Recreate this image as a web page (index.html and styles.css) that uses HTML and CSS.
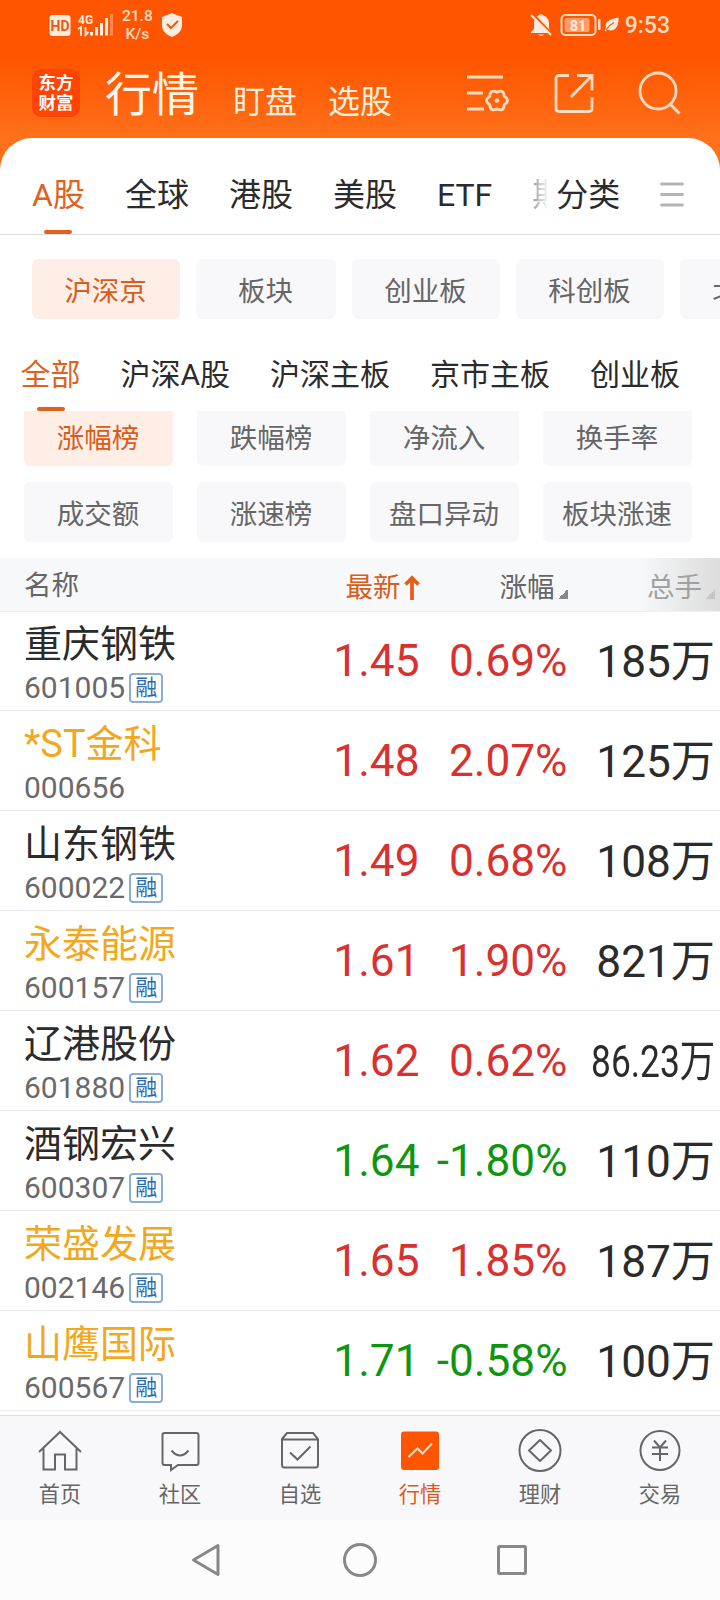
FILE: index.html
```
<!DOCTYPE html>
<html lang="zh-CN">
<head>
    <meta charset="UTF-8">
    <meta name="viewport" content="width=device-width, initial-scale=1.0">
    <title>行情</title>
    <link rel="stylesheet" href="styles.css">
</head>
<body>
    <div class="app">
        <header class="top">
            <div class="status-bar">
                <svg class="status-left" width="66" height="28" viewBox="0 0 66 28">
                    <rect x="1.500" y="3" width="21" height="21" rx="3" fill="#ffece0"/>
                    <text x="12" y="18.500" class="hd-text">HD</text>
                    <text x="30" y="11.500" class="net-text">4G</text>
                    <path d="M30 17l3-2v9M37.500 15v8l3-3" stroke="#ffece0" stroke-width="1.800" fill="none"/>
                    <g fill="#ffece0">
                        <rect x="42" y="20" width="3" height="3.500"/>
                        <rect x="47" y="15" width="3" height="8.500"/>
                        <rect x="52" y="11" width="3" height="12.500"/>
                        <rect x="57" y="6" width="3" height="17.500"/>
                        <rect x="62" y="2" width="3" height="21.500" opacity="0.35"/>
                    </g>
                </svg>
                <div class="net-speed"><span>21.8</span><span>K/s</span></div>
                <svg class="shield" width="22" height="26" viewBox="0 0 22 26">
                    <path d="M11 1l10 4v8c0 6-4 9.500-10 12C5 22.500 1 19 1 13V5z" fill="#ffece0"/>
                    <path d="M6 12l4 4 7-7" fill="none" stroke="#e85a14" stroke-width="2"/>
                </svg>
                <svg class="bell" width="22" height="24" viewBox="0 0 22 24">
                    <path d="M8.500 2.500Q11 0 13.500 2.500Q19 4.500 19 10v6l2 3v1H1v-1l3-3v-6Q4 4.500 8.500 2.500z" fill="#ffece0"/>
                    <path d="M8 21.500h6q-3 2.500-6 0z" fill="#ffece0"/>
                    <path d="M2.500 0.500L22 21" stroke="#ff5500" stroke-width="2"/>
                    <path d="M1 2L21 22" stroke="#ffece0" stroke-width="2"/>
                </svg>
                <svg class="battery" width="42" height="24" viewBox="0 0 42 24">
                    <rect x="1.500" y="2" width="34" height="20" rx="4" fill="none" stroke="#ffdcc4" stroke-width="2"/>
                    <rect x="4.500" y="5" width="25" height="14" rx="2" fill="#ff9c66"/>
                    <rect x="38" y="6" width="2.500" height="11" rx="1" fill="#ffdcc4"/>
                    <text x="18" y="17.500" class="battery-text">81</text>
                </svg>
                <svg class="leaf" width="15" height="15" viewBox="0 0 15 15">
                    <path d="M14.500 0.500C15 8 12 14 6 13.500L3.500 12.500 1.500 14.500 0.500 13.500 2 11C0 4 7 2 14.500 0.500z" fill="#ffece0"/>
                    <path d="M2 13Q5 8 10 5.500" stroke="#ff5500" stroke-width="1.200" fill="none"/>
                </svg>
                <span class="clock">9:53</span>
            </div>
            <div class="title-bar">
                <div class="logo"><span>东方</span><span>财富</span></div>
                <h1 class="title">行情</h1>
                <span class="title-link">盯盘</span>
                <span class="title-link">选股</span>
                <div class="title-icons">
                    <svg width="42" height="38" viewBox="0 0 42 38" fill="none" stroke="#ffdcc0" stroke-width="2.800">
                        <path d="M0 3h36M0 19h16M0 35h17"/>
                        <path d="M37.200 22.350Q43.800 26.500 37.200 30.650Q36.900 38.450 30 34.800Q23.100 38.450 22.800 30.650Q16.200 26.500 22.800 22.350Q23.100 14.550 30 18.200Q36.900 14.550 37.200 22.350z" stroke-linejoin="round"/>
                        <circle cx="30" cy="26.500" r="2.300" fill="#ffdcc0" stroke="none"/>
                    </svg>
                    <svg width="40" height="40" viewBox="0 0 40 40" fill="none" stroke="#ffdcc0" stroke-width="2.800">
                        <path d="M15 2.500H5Q2 2.500 2 5.500v30q0 3 3 3H35q3 0 3-3V24.500M23 2.500h15v15M37.500 3L17 24"/>
                    </svg>
                    <svg width="44" height="44" viewBox="0 0 44 44" fill="none" stroke="#ffdcc0" stroke-width="2.800">
                        <circle cx="20" cy="20" r="18"/>
                        <path d="M32 33l9.500 9.500" stroke-width="3"/>
                    </svg>
                </div>
            </div>
        </header>

        <main class="panel">
            <nav class="market-tabs">
                <span class="market-tab active">A股</span>
                <span class="market-tab">全球</span>
                <span class="market-tab">港股</span>
                <span class="market-tab">美股</span>
                <span class="market-tab">ETF</span>
                <span class="market-tab cut">期</span>
                <span class="category">分类</span>
                <svg class="menu-icon" width="24" height="26" viewBox="0 0 24 26" stroke="#b4b4b4" stroke-width="2.800" stroke-linecap="round">
                    <path d="M1.500 2h21M1.500 12.500h21M1.500 23h21"/>
                </svg>
            </nav>

            <div class="board-chips">
                <span class="chip active">沪深京</span>
                <span class="chip short">板块</span>
                <span class="chip">创业板</span>
                <span class="chip">科创板</span>
                <span class="chip">北交所</span>
            </div>

            <nav class="sub-tabs">
                <span class="sub-tab active">全部</span>
                <span class="sub-tab">沪深A股</span>
                <span class="sub-tab">沪深主板</span>
                <span class="sub-tab">京市主板</span>
                <span class="sub-tab">创业板</span>
            </nav>

            <div class="rank-scroll">
                <div class="rank-chips">
                    <span class="chip active">涨幅榜</span>
                    <span class="chip">跌幅榜</span>
                    <span class="chip">净流入</span>
                    <span class="chip">换手率</span>
                    <span class="chip">成交额</span>
                    <span class="chip">涨速榜</span>
                    <span class="chip">盘口异动</span>
                    <span class="chip">板块涨速</span>
                </div>
            </div>

            <div class="stock-head">
                <span class="head-name">名称</span>
                <span class="head-price">最新<svg width="16" height="26" viewBox="0 0 16 26" fill="none" stroke="#e2601c" stroke-width="3.800"><path d="M8 25V3M1.500 9.500L8 3l6.500 6.500"/></svg></span>
                <span class="head-change">涨幅<i class="corner"></i></span>
                <span class="head-volume">总手<i class="corner"></i></span>
            </div>

            <div class="stock-list">
                <div class="stock">
                    <div class="stock-name"><b>重庆钢铁</b><span class="code">601005<em>融</em></span></div>
                    <span class="price up">1.45</span><span class="change up">0.69%</span><span class="volume">185万</span>
                </div>
                <div class="stock">
                    <div class="stock-name held"><b>*ST金科</b><span class="code">000656</span></div>
                    <span class="price up">1.48</span><span class="change up">2.07%</span><span class="volume">125万</span>
                </div>
                <div class="stock">
                    <div class="stock-name"><b>山东钢铁</b><span class="code">600022<em>融</em></span></div>
                    <span class="price up">1.49</span><span class="change up">0.68%</span><span class="volume">108万</span>
                </div>
                <div class="stock">
                    <div class="stock-name held"><b>永泰能源</b><span class="code">600157<em>融</em></span></div>
                    <span class="price up">1.61</span><span class="change up">1.90%</span><span class="volume">821万</span>
                </div>
                <div class="stock">
                    <div class="stock-name"><b>辽港股份</b><span class="code">601880<em>融</em></span></div>
                    <span class="price up">1.62</span><span class="change up">0.62%</span><span class="volume narrow">86.23万</span>
                </div>
                <div class="stock">
                    <div class="stock-name"><b>酒钢宏兴</b><span class="code">600307<em>融</em></span></div>
                    <span class="price down">1.64</span><span class="change down">-1.80%</span><span class="volume">110万</span>
                </div>
                <div class="stock">
                    <div class="stock-name held"><b>荣盛发展</b><span class="code">002146<em>融</em></span></div>
                    <span class="price up">1.65</span><span class="change up">1.85%</span><span class="volume">187万</span>
                </div>
                <div class="stock">
                    <div class="stock-name held"><b>山鹰国际</b><span class="code">600567<em>融</em></span></div>
                    <span class="price down">1.71</span><span class="change down">-0.58%</span><span class="volume">100万</span>
                </div>
            </div>
        </main>

        <footer class="tab-bar">
            <div class="tab-item">
                <svg width="44" height="44" viewBox="0 0 44 44">
                    <path d="M1 23L22 3l21 20M5.500 19.500V40.500H17V25.500H27V40.500H38.500V19.500"/>
                </svg>
                <span>首页</span>
            </div>
            <div class="tab-item">
                <svg width="44" height="44" viewBox="0 0 44 44">
                    <path d="M5.500 4h33q2 0 2 2v28q0 2-2 2H20l-7 5v-5H6.500q-2 0-2-2V6q0-2 2-2zM13.500 21.500q8.500 10 17 0"/>
                </svg>
                <span>社区</span>
            </div>
            <div class="tab-item">
                <svg width="44" height="44" viewBox="0 0 44 44">
                    <path d="M4 10l5-6h26l5 6v26q0 2.500-2.500 2.500h-31Q4 38.500 4 36zM4 10.500h36M12 23.500l7.500 7 13-13"/>
                </svg>
                <span>自选</span>
            </div>
            <div class="tab-item active">
                <svg width="44" height="44" viewBox="0 0 44 44">
                    <rect class="tile" x="3" y="2.500" width="38" height="38.500" rx="3"/>
                    <path class="trend" d="M10.500 28l9-8.500 5 5L34 14.500"/>
                </svg>
                <span>行情</span>
            </div>
            <div class="tab-item">
                <svg width="44" height="44" viewBox="0 0 44 44">
                    <circle cx="22" cy="21.500" r="20.500"/>
                    <path d="M22 11l11 10.500-11 10.500-11-10.500z" stroke-linejoin="round"/>
                </svg>
                <span>理财</span>
            </div>
            <div class="tab-item">
                <svg width="44" height="44" viewBox="0 0 44 44">
                    <circle cx="22" cy="21.500" r="19.500"/>
                    <path d="M16 11.500l6 7 6-7M14 18.500h16M14 25h16M22 18.500v13.500"/>
                </svg>
                <span>交易</span>
            </div>
        </footer>

        <div class="system-nav">
            <svg width="34" height="34" viewBox="0 0 34 34"><path d="M27 2.500L2.500 17 27 31.500z"/></svg>
            <svg width="34" height="34" viewBox="0 0 34 34"><circle cx="17" cy="17" r="15.500"/></svg>
            <svg width="34" height="34" viewBox="0 0 34 34"><rect x="3.500" y="3.500" width="27" height="27" rx="1"/></svg>
        </div>
    </div>
</body>
</html>
```
FILE: styles.css
```
* {
    margin: 0;
    padding: 0;
    box-sizing: border-box;
}

body {
    width: 720px;
    height: 1600px;
    overflow: hidden;
    font-family: Roboto, "Noto Sans CJK SC", sans-serif;
    background: #fff;
    color: #2b2b2b;
}

svg {
    display: block;
    flex-shrink: 0;
}

.app {
    display: flex;
    flex-direction: column;
    height: 1600px;
    background: linear-gradient(#ff5500 0, #ff5500 58px, #ff701a 138px, #ff701a 180px, #fff 180px);
}

/* status bar */
.top {
    height: 138px;
}

.status-bar {
    display: flex;
    align-items: center;
    height: 49px;
    padding: 0 50px 0 48px;
    color: #ffdcc4;
}

.status-left {
    margin-top: 2px;
}

.hd-text {
    font-size: 14px;
    font-weight: bold;
    text-anchor: middle;
    fill: #e85a14;
}

.net-text {
    font-size: 12px;
    font-weight: bold;
    fill: #ffece0;
}

.net-speed {
    display: flex;
    flex-direction: column;
    align-items: center;
    margin-left: 8px;
    font-size: 15.5px;
    font-weight: 500;
    line-height: 18px;
}

.shield {
    margin-left: 8px;
}

.bell {
    margin-left: auto;
}

.battery {
    margin-left: 8px;
}

.battery-text {
    font-size: 14.5px;
    font-weight: bold;
    text-anchor: middle;
    fill: #ffece0;
}

.leaf {
    margin-left: 2px;
}

.clock {
    margin-left: 6px;
    padding-top: 2px;
    font-size: 23px;
    font-weight: 500;
}

/* title bar */
.title-bar {
    display: flex;
    height: 89px;
    padding: 0 38px 0 32px;
}

.logo {
    display: flex;
    flex-direction: column;
    justify-content: center;
    align-items: center;
    width: 48px;
    height: 48px;
    margin-top: 20px;
    border-radius: 9px;
    background: #ff4404;
    color: #fff;
    font-size: 17.5px;
    font-weight: 700;
    line-height: 20px;
}

.title {
    margin-left: 25px;
    font-size: 47px;
    font-weight: 400;
    line-height: 92px;
    color: #fff5e8;
}

.title-link {
    margin-left: 34px;
    font-size: 32px;
    line-height: 106px;
    color: #fff0dc;
}

.title-link + .title-link {
    margin-left: 31px;
}

.title-icons {
    display: flex;
    align-items: center;
    gap: 44.500px;
    height: 87px;
    margin-left: auto;
}

/* white panel */
.panel {
    flex: 1;
    min-height: 0;
    border-radius: 32px 32px 0 0;
    background: #fff;
}

.market-tabs {
    display: flex;
    align-items: center;
    height: 97px;
    padding: 17px 36px 0 32px;
    border-bottom: 1px solid #dedede;
    font-size: 32px;
    line-height: 60px;
}

.market-tab {
    margin-right: 40px;
    white-space: nowrap;
}

.market-tab.active,
.sub-tab.active {
    position: relative;
    color: #e2601c;
}

.market-tab.active::after,
.sub-tab.active::after {
    content: '';
    position: absolute;
    left: 50%;
    bottom: -9px;
    width: 28px;
    height: 4px;
    margin-left: -14px;
    border-radius: 2px;
    background: #e2601c;
}

.market-tab.cut {
    width: 15px;
    margin-right: 9px;
    overflow: hidden;
    background: linear-gradient(90deg, #999, #f4f4f4);
    background-clip: text;
    color: transparent;
}

.menu-icon {
    margin-left: auto;
}

.chip {
    display: flex;
    align-items: center;
    justify-content: center;
    height: 60px;
    padding-right: 1px;
    border-radius: 6px;
    background: #f8f8fa;
    color: #666;
    font-size: 27.5px;
    white-space: nowrap;
}

.chip.active {
    background: #ffeee6;
    color: #d85c20;
}

.board-chips {
    display: flex;
    gap: 16px;
    padding: 24px 0 0 32px;
    overflow: hidden;
}

.board-chips .chip {
    flex: 0 0 148px;
}

.board-chips .chip.short {
    flex-basis: 140px;
}

.sub-tabs {
    display: flex;
    gap: 40px;
    height: 92px;
    padding: 26px 0 0 20.500px;
    font-size: 30px;
    line-height: 60px;
}

.sub-tab.active {
    height: 60px;
}

.sub-tab.active::after {
    bottom: -6px;
}

/* first row is scrolled slightly under the tabs */
.rank-scroll {
    display: flex;
    flex-direction: column;
    justify-content: flex-end;
    height: 131px;
    overflow: hidden;
}

.rank-chips {
    display: grid;
    grid-template-columns: repeat(4, 149px);
    gap: 16px 24px;
    padding-left: 24px;
}

/* stock table */
.stock-head,
.stock {
    display: grid;
    grid-template-columns: 260px 159.500px 148px 147.500px;
    align-items: center;
}

.stock-head {
    height: 54px;
    margin-top: 16px;
    border-bottom: 1px solid #f0f0f0;
    background: linear-gradient(90deg, #f7f8fa 640px, #dcdcdc 720px);
    color: #666;
    font-size: 27.5px;
}

.stock-head span {
    display: flex;
    align-items: center;
    justify-content: flex-end;
    padding-top: 5px;
    line-height: 50px;
}

.stock-head .head-name {
    justify-content: flex-start;
    padding: 1px 0 0 24px;
}

.stock-head .head-price {
    gap: 3px;
    color: #d85c20;
}

.corner {
    align-self: flex-end;
    width: 10px;
    height: 10px;
    margin: 0 0 14px 3px;
    background: linear-gradient(135deg, transparent 50%, #888 50%);
}

.head-volume {
    color: #a0a0a0;
}

.head-volume .corner {
    opacity: 0.3;
}

.stock-list {
    margin-top: -1px;
}

.stock {
    height: 100px;
    border-bottom: 1px solid #ebebeb;
    font-size: 44.2px;
    line-height: 60px;
    text-align: right;
}

.stock-name {
    display: flex;
    flex-direction: column;
    padding: 4px 0 0 24px;
    text-align: left;
}

.stock-name b {
    font-size: 38px;
    font-weight: 400;
    line-height: 50px;
}

.stock-name.held b {
    color: #f2a81d;
}

.code {
    display: flex;
    align-items: center;
    height: 38px;
    color: #6a6a6a;
    font-size: 30px;
}

.code em {
    width: 34px;
    height: 30px;
    margin: 1px 0 0 4px;
    border: 2px solid #8aaed2;
    border-radius: 4px;
    color: #2f6cae;
    font-size: 22px;
    font-style: normal;
    line-height: 26px;
    text-align: center;
}

.up {
    color: #d93030;
}

.down {
    color: #0f960f;
}

.change {
    white-space: nowrap;
}

.volume {
    justify-self: end;
    padding-top: 2px;
    white-space: nowrap;
}

.volume.narrow {
    transform: scaleX(0.8);
    transform-origin: right;
}

/* bottom tabs */
.tab-bar {
    display: flex;
    height: 105px;
    border-top: 1px solid #dedede;
    background: #f8f8fa;
}

.tab-item {
    display: flex;
    flex: 1;
    flex-direction: column;
    align-items: center;
    padding-top: 13px;
    color: #666;
    font-size: 21.200px;
    line-height: 43px;
}

.tab-item svg {
    fill: none;
    stroke: #666;
    stroke-width: 2;
}

.tab-item .tile {
    fill: #ff5500;
    stroke: none;
}

.tab-item .trend {
    stroke: #ffdcc0;
}

.tab-item.active {
    color: #d85c20;
}

/* android buttons */
.system-nav {
    display: flex;
    align-items: center;
    justify-content: center;
    gap: 118px;
    height: 80px;
    background: #fcfcfc;
}

.system-nav svg {
    fill: none;
    stroke: #888;
    stroke-width: 3;
    stroke-linejoin: round;
}
```
